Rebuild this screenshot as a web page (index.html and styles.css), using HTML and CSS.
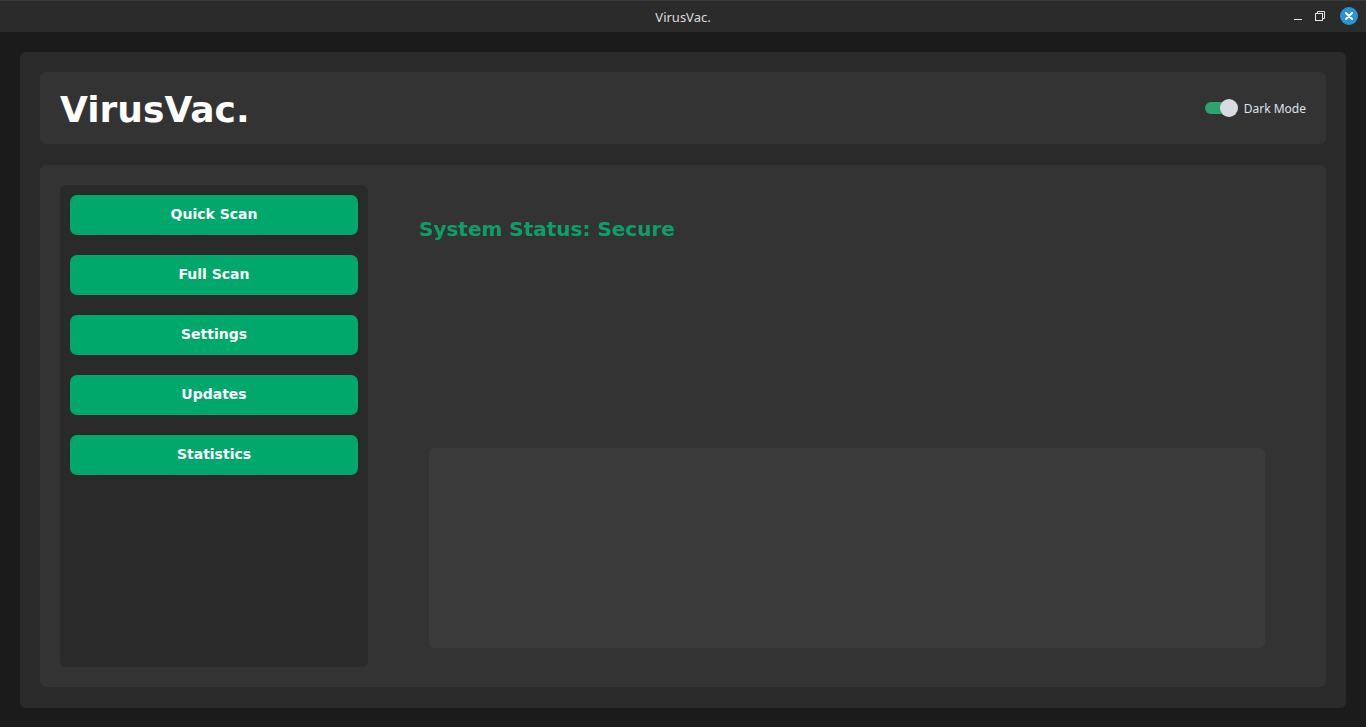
FILE: index.html
```html
<!DOCTYPE html>
<html>
<head>
<meta charset="utf-8">
<link rel="stylesheet" href="styles.css">
</head>
<body>
<div class="titlebar">
  <div class="tb-title">VirusVac.</div>
  <div class="tb-controls">
    <svg class="tb-min" width="12" height="12" viewBox="0 0 12 12"><line x1="2" y1="9.5" x2="10" y2="9.5" stroke="#e6e6e6" stroke-width="1"/></svg>
    <svg class="tb-max" width="12" height="12" viewBox="0 0 12 12"><rect x="1.5" y="3.5" width="7" height="7" fill="none" stroke="#e6e6e6" stroke-width="1"/><path d="M3.5 3.5V1.5H10.5V8.5H8.5" fill="none" stroke="#e6e6e6" stroke-width="1"/></svg>
    <div class="tb-close"><svg width="18" height="18" viewBox="0 0 18 18"><path d="M6 6L12 12M12 6L6 12" stroke="#ffffff" stroke-width="2" stroke-linecap="round"/></svg></div>
  </div>
</div>
<div class="window">
  <div class="outer">
    <div class="header">
      <div class="logo">VirusVac.</div>
      <div class="mode">
        <div class="switch"><div class="knob"></div></div>
        <span class="mode-label">Dark Mode</span>
      </div>
    </div>
    <div class="main">
      <div class="sidebar">
        <button class="btn">Quick Scan</button>
        <button class="btn">Full Scan</button>
        <button class="btn">Settings</button>
        <button class="btn">Updates</button>
        <button class="btn">Statistics</button>
      </div>
      <div class="content">
        <div class="status">System Status: Secure</div>
        <div class="logbox"></div>
      </div>
    </div>
  </div>
</div>
</body>
</html>
```

FILE: styles.css
```css
* { box-sizing: border-box; }
html, body { margin: 0; padding: 0; }
body {
  width: 1366px;
  height: 727px;
  background: #1b1b1b;
  font-family: "DejaVu Sans", sans-serif;
  overflow: hidden;
  display: flex;
  flex-direction: column;
}
.titlebar {
  height: 32px;
  background: #2b2b2b;
  border-top: 1px solid #3a3a3a;
  position: relative;
  display: flex;
  align-items: center;
  justify-content: center;
  flex: none;
}
.tb-title {
  font-family: "Noto Sans", sans-serif;
  font-size: 13px;
  color: #dcdcdc;
}
.tb-controls {
  position: absolute;
  right: 8px;
  top: 6px;
  display: flex;
  align-items: center;
  gap: 10px;
}
.tb-min, .tb-max { display: block; }
.tb-close {
  width: 18px;
  height: 18px;
  border-radius: 50%;
  background: #2a93d5;
  margin-left: 4px;
}
.tb-close svg { display: block; }
.window {
  flex: 1;
  padding: 20px 20px 19px;
  display: flex;
}
.outer {
  flex: 1;
  background: #2a2a2a;
  border-radius: 6px;
  padding: 20px 20px 21px;
  display: flex;
  flex-direction: column;
  gap: 21px;
}
.header {
  height: 72px;
  background: #333333;
  border-radius: 6px;
  display: flex;
  align-items: center;
  justify-content: space-between;
  padding: 0 20px;
  flex: none;
}
.logo {
  font-weight: bold;
  font-size: 36px;
  color: #ffffff;
  margin-top: 2px;
}
.mode {
  display: flex;
  align-items: center;
  gap: 6px;
}
.switch {
  width: 33px;
  height: 18px;
  position: relative;
  display: flex;
  align-items: center;
}
.switch::before {
  content: "";
  display: block;
  width: 30px;
  height: 12px;
  border-radius: 6px;
  background: #2ea36e;
}
.knob {
  position: absolute;
  right: 0;
  top: 0;
  width: 18px;
  height: 18px;
  border-radius: 50%;
  background: #d8dce2;
}
.mode-label {
  font-family: "Noto Sans", sans-serif;
  font-size: 12px;
  color: #dce4ee;
}
.main {
  flex: 1;
  background: #333333;
  border-radius: 6px;
  padding: 20px;
  display: flex;
  gap: 51px;
}
.sidebar {
  width: 308px;
  background: #2a2a2a;
  border-radius: 6px;
  padding: 10px;
  display: flex;
  flex-direction: column;
  gap: 20px;
}
.btn {
  height: 40px;
  border: none;
  border-radius: 7px;
  background: #00a86b;
  color: #ffffff;
  font-family: "DejaVu Sans", sans-serif;
  font-weight: bold;
  font-size: 14px;
  padding: 0 0 2px;
}
.content {
  flex: 1;
  display: flex;
  flex-direction: column;
  padding-right: 41px;
}
.status {
  margin-top: 32px;
  font-weight: bold;
  font-size: 20px;
  color: #0f9d69;
}
.logbox {
  margin-top: auto;
  margin-left: 10px;
  margin-bottom: 19px;
  height: 200px;
  background: #3b3b3b;
  border-radius: 6px;
}
```
